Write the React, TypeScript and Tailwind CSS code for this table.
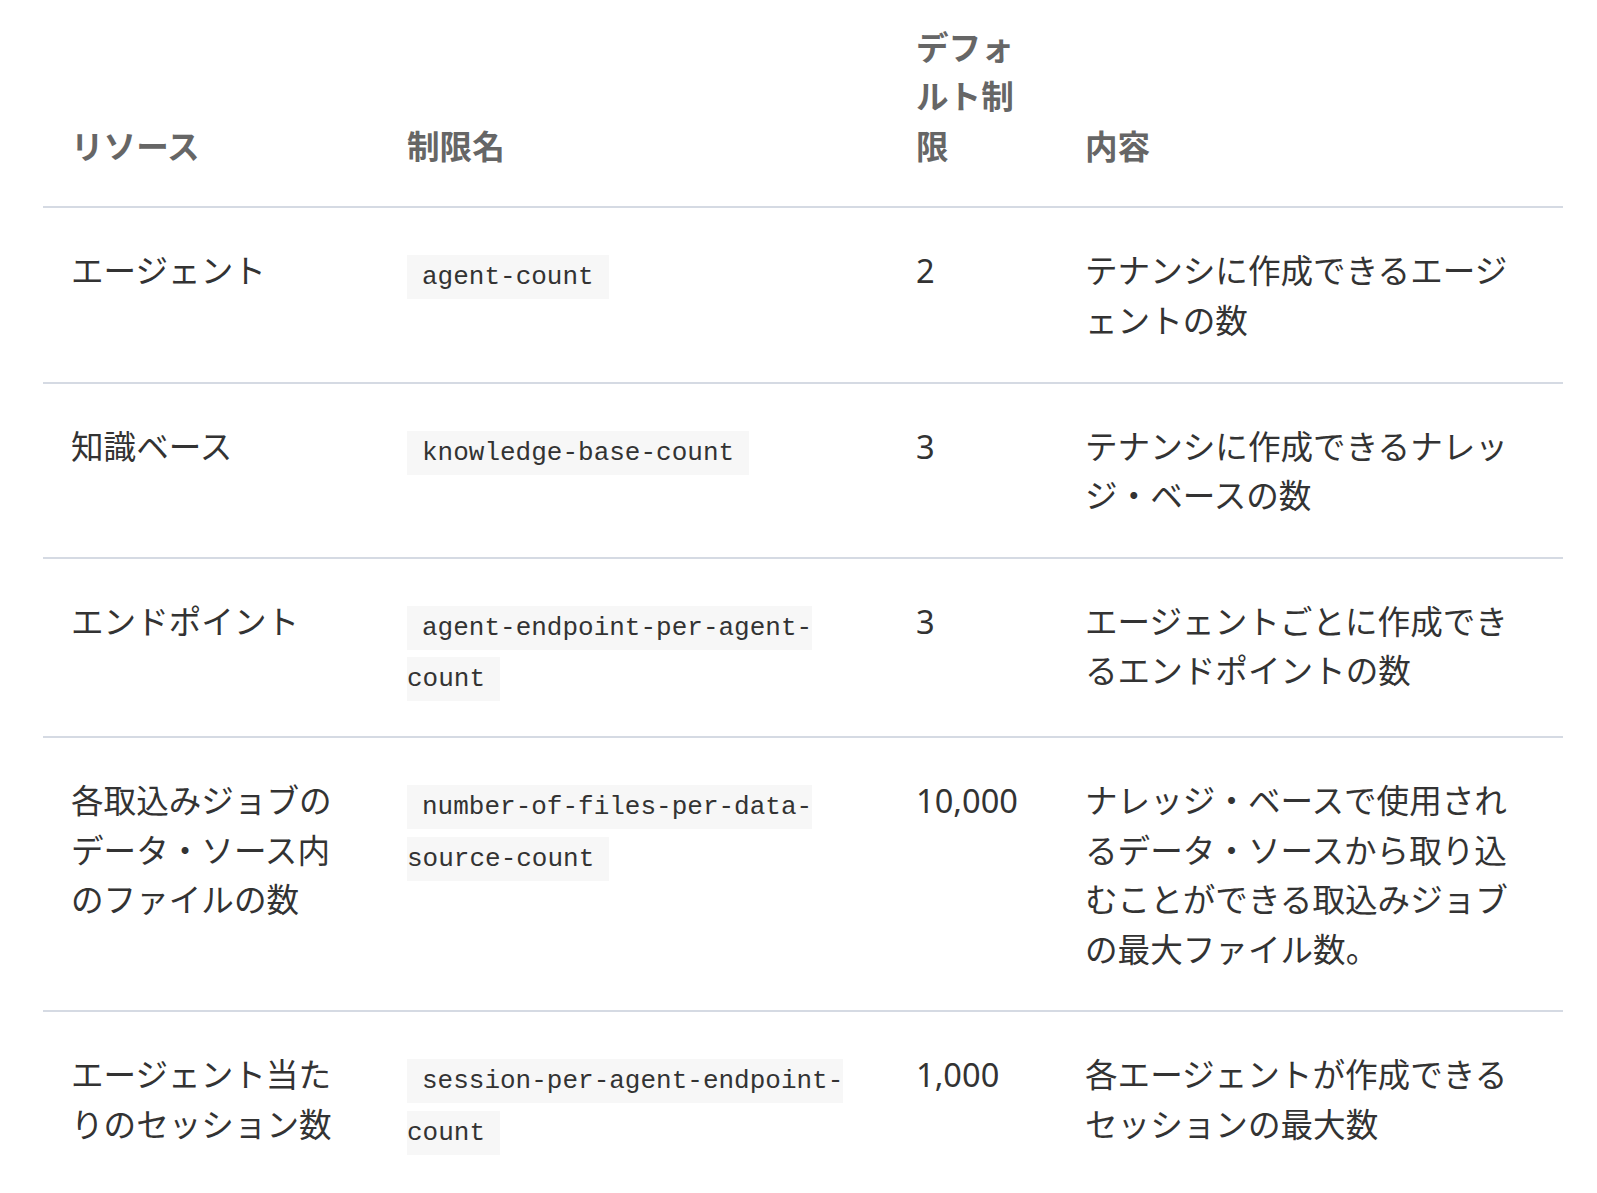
import React from "react";

type Row = { res: string; name: string; def: string; desc: string };

const rows: Row[] = [
  { res: "エージェント", name: "agent-count", def: "2", desc: "テナンシに作成できるエージェントの数" },
  { res: "知識ベース", name: "knowledge-base-count", def: "3", desc: "テナンシに作成できるナレッジ・ベースの数" },
  { res: "エンドポイント", name: "agent-endpoint-per-agent-count", def: "3", desc: "エージェントごとに作成できるエンドポイントの数" },
  {
    res: "各取込みジョブのデータ・ソース内のファイルの数",
    name: "number-of-files-per-data-source-count",
    def: "10,000",
    desc: "ナレッジ・ベースで使用されるデータ・ソースから取り込むことができる取込みジョブの最大ファイル数。",
  },
  {
    res: "エージェント当たりのセッション数",
    name: "session-per-agent-endpoint-count",
    def: "1,000",
    desc: "各エージェントが作成できるセッションの最大数",
  },
];

function Code({ children }: { children: string }) {
  const parts = children.split("-");
  return (
    <code className="bg-[#f7f7f7] px-[15px] py-[7px] text-[26px] leading-[26px] text-[#333] [font-family:'Liberation_Mono',monospace]">
      {parts.map((p, i) => (
        <React.Fragment key={i}>
          {p}
          {i < parts.length - 1 ? "-" : ""}
          {i < parts.length - 1 ? <wbr /> : null}
        </React.Fragment>
      ))}
    </code>
  );
}

export default function App() {
  return (
    <div className="min-h-[1193px] bg-white pl-[43px] pr-[34px] [font-family:'Noto_Sans','Noto_Sans_CJK_JP',sans-serif] text-[32.6px] leading-[49.4px] text-[#333]">
      <table className="w-[1520px] table-fixed border-collapse">
        <colgroup>
          <col className="w-[336px]" />
          <col className="w-[509px]" />
          <col className="w-[169px]" />
          <col className="w-[506px]" />
        </colgroup>
        <thead>
          <tr className="border-b-2 border-[#d5dae3]">
            {["リソース", "制限名", "デフォルト制限", "内容"].map((h) => (
              <th
                key={h}
                className="px-[28px] pt-[23px] pb-[35px] text-left align-bottom font-bold text-[#666]"
              >
                {h}
              </th>
            ))}
          </tr>
        </thead>
        <tbody>
          {rows.map((r, i) => (
            <tr key={r.name} className={i < rows.length - 1 ? "border-b-2 border-[#d5dae3]" : ""}>
              <td className="px-[28px] pt-[38px] pb-[36.5px] align-top">{r.res}</td>
              <td className="px-[28px] pt-[38px] pb-[36.5px] align-top leading-[51.5px]">
                <Code>{r.name}</Code>
              </td>
              <td className="px-[28px] pt-[38px] pb-[36.5px] align-top">{r.def}</td>
              <td className="px-[28px] pt-[38px] pb-[36.5px] align-top">{r.desc}</td>
            </tr>
          ))}
        </tbody>
      </table>
    </div>
  );
}
